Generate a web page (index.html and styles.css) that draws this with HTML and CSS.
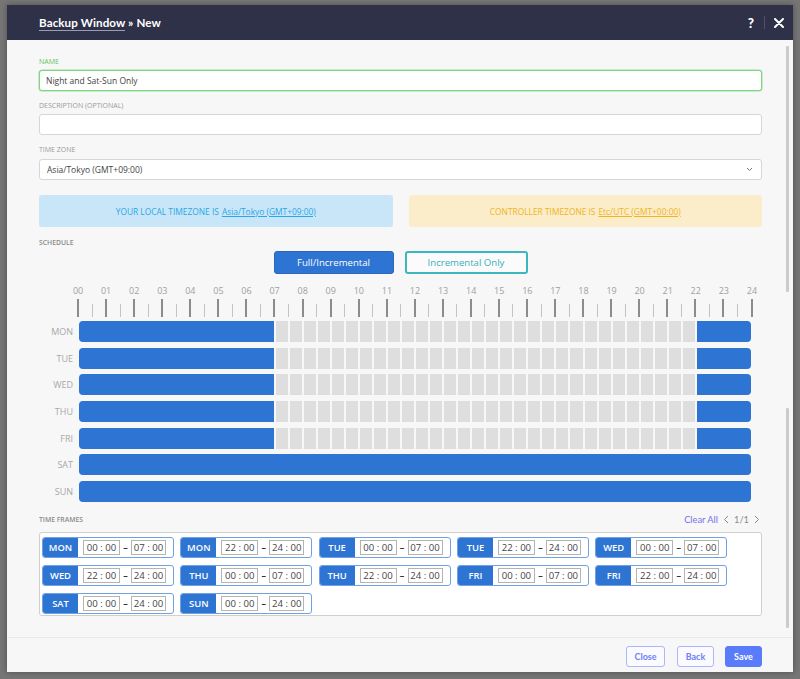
FILE: index.html
```html
<!DOCTYPE html>
<html lang="en">
<head>
<meta charset="utf-8">
<title>Backup Window » New</title>
<link rel="stylesheet" href="styles.css">
</head>
<body>
<div class="backdrop">
  <div class="modal">
    <header class="modal-head">
      <h1 class="title"><span class="crumb">Backup Window</span> » New</h1>
      <div class="head-tools">
        <span class="help">?</span>
        <span class="sep"></span>
        <svg class="close-x" width="10" height="10" viewBox="0 0 10 10"><path d="M1 1L9 9M9 1L1 9" stroke="#fff" stroke-width="2" stroke-linecap="round"/></svg>
      </div>
    </header>

    <main class="modal-body">
      <div class="field">
        <label class="lbl lbl-ok">NAME</label>
        <div class="input input-ok">Night and Sat-Sun Only</div>
      </div>
      <div class="field">
        <label class="lbl">DESCRIPTION (OPTIONAL)</label>
        <div class="input"></div>
      </div>
      <div class="field">
        <label class="lbl">TIME ZONE</label>
        <div class="input select">
          <span>Asia/Tokyo (GMT+09:00)</span>
          <svg width="7" height="5" viewBox="0 0 7 5"><path d="M1 1L3.5 3.5L6 1" fill="none" stroke="#777" stroke-width="1"/></svg>
        </div>
      </div>

      <div class="banners">
        <div class="banner banner-info">YOUR LOCAL TIMEZONE IS <u>Asia/Tokyo (GMT+09:00)</u></div>
        <div class="banner banner-warn">CONTROLLER TIMEZONE IS <u>Etc/UTC (GMT+00:00)</u></div>
      </div>

      <div class="sect">SCHEDULE</div>
      <div class="modes">
        <button class="mode mode-on">Full/Incremental</button>
        <button class="mode mode-off">Incremental Only</button>
      </div>

      <div class="hours">
        <span>00</span><span>01</span><span>02</span><span>03</span><span>04</span><span>05</span><span>06</span><span>07</span><span>08</span><span>09</span><span>10</span><span>11</span><span>12</span><span>13</span><span>14</span><span>15</span><span>16</span><span>17</span><span>18</span><span>19</span><span>20</span><span>21</span><span>22</span><span>23</span><span>24</span>
      </div>
      <div class="ticks">
        <i></i><i></i><i></i><i></i><i></i><i></i><i></i><i></i><i></i><i></i><i></i><i></i><i></i><i></i><i></i><i></i><i></i><i></i><i></i><i></i><i></i><i></i><i></i><i></i><i></i><i></i><i></i><i></i><i></i><i></i><i></i><i></i><i></i><i></i><i></i><i></i><i></i><i></i><i></i><i></i><i></i><i></i><i></i><i></i><i></i><i></i><i></i><i></i><i></i>
      </div>

      <div class="days">
        <div class="day"><span class="dname">MON</span><div class="cells"><b class="on a"></b><i></i><i></i><i></i><i></i><i></i><i></i><i></i><i></i><i></i><i></i><i></i><i></i><i></i><i></i><i></i><i></i><i></i><i></i><i></i><i></i><i></i><i></i><i></i><i></i><i></i><i></i><i></i><i></i><i></i><i></i><b class="on b"></b></div></div>
        <div class="day"><span class="dname">TUE</span><div class="cells"><b class="on a"></b><i></i><i></i><i></i><i></i><i></i><i></i><i></i><i></i><i></i><i></i><i></i><i></i><i></i><i></i><i></i><i></i><i></i><i></i><i></i><i></i><i></i><i></i><i></i><i></i><i></i><i></i><i></i><i></i><i></i><i></i><b class="on b"></b></div></div>
        <div class="day"><span class="dname">WED</span><div class="cells"><b class="on a"></b><i></i><i></i><i></i><i></i><i></i><i></i><i></i><i></i><i></i><i></i><i></i><i></i><i></i><i></i><i></i><i></i><i></i><i></i><i></i><i></i><i></i><i></i><i></i><i></i><i></i><i></i><i></i><i></i><i></i><i></i><b class="on b"></b></div></div>
        <div class="day"><span class="dname">THU</span><div class="cells"><b class="on a"></b><i></i><i></i><i></i><i></i><i></i><i></i><i></i><i></i><i></i><i></i><i></i><i></i><i></i><i></i><i></i><i></i><i></i><i></i><i></i><i></i><i></i><i></i><i></i><i></i><i></i><i></i><i></i><i></i><i></i><i></i><b class="on b"></b></div></div>
        <div class="day"><span class="dname">FRI</span><div class="cells"><b class="on a"></b><i></i><i></i><i></i><i></i><i></i><i></i><i></i><i></i><i></i><i></i><i></i><i></i><i></i><i></i><i></i><i></i><i></i><i></i><i></i><i></i><i></i><i></i><i></i><i></i><i></i><i></i><i></i><i></i><i></i><i></i><b class="on b"></b></div></div>
        <div class="day"><span class="dname">SAT</span><div class="cells"><b class="on full"></b></div></div>
        <div class="day"><span class="dname">SUN</span><div class="cells"><b class="on full"></b></div></div>
      </div>

      <div class="tf-head">
        <div class="sect">TIME FRAMES</div>
        <div class="pager">
          <span class="clear">Clear All</span>
          <svg width="6" height="9" viewBox="0 0 6 9"><path d="M5 1L1.5 4.5L5 8" fill="none" stroke="#888" stroke-width="1"/></svg>
          <span class="pg">1/1</span>
          <svg width="6" height="9" viewBox="0 0 6 9"><path d="M1 1L4.5 4.5L1 8" fill="none" stroke="#888" stroke-width="1"/></svg>
        </div>
      </div>
      <div class="frames">
        <div class="frame"><span class="tag">MON</span><span class="t">00 : 00</span><span class="dash">–</span><span class="t t2">07 : 00</span></div>
        <div class="frame"><span class="tag">MON</span><span class="t">22 : 00</span><span class="dash">–</span><span class="t t2">24 : 00</span></div>
        <div class="frame"><span class="tag">TUE</span><span class="t">00 : 00</span><span class="dash">–</span><span class="t t2">07 : 00</span></div>
        <div class="frame"><span class="tag">TUE</span><span class="t">22 : 00</span><span class="dash">–</span><span class="t t2">24 : 00</span></div>
        <div class="frame"><span class="tag">WED</span><span class="t">00 : 00</span><span class="dash">–</span><span class="t t2">07 : 00</span></div>
        <div class="frame"><span class="tag">WED</span><span class="t">22 : 00</span><span class="dash">–</span><span class="t t2">24 : 00</span></div>
        <div class="frame"><span class="tag">THU</span><span class="t">00 : 00</span><span class="dash">–</span><span class="t t2">07 : 00</span></div>
        <div class="frame"><span class="tag">THU</span><span class="t">22 : 00</span><span class="dash">–</span><span class="t t2">24 : 00</span></div>
        <div class="frame"><span class="tag">FRI</span><span class="t">00 : 00</span><span class="dash">–</span><span class="t t2">07 : 00</span></div>
        <div class="frame"><span class="tag">FRI</span><span class="t">22 : 00</span><span class="dash">–</span><span class="t t2">24 : 00</span></div>
        <div class="frame"><span class="tag">SAT</span><span class="t">00 : 00</span><span class="dash">–</span><span class="t t2">24 : 00</span></div>
        <div class="frame"><span class="tag">SUN</span><span class="t">00 : 00</span><span class="dash">–</span><span class="t t2">24 : 00</span></div>
      </div>
    </main>

    <footer class="modal-foot">
      <button class="fbtn fbtn-close">Close</button>
      <button class="fbtn">Back</button>
      <button class="fbtn fbtn-primary">Save</button>
    </footer>

    <div class="scroll s1"></div>
    <div class="scroll s2"></div>
  </div>
</div>
</body>
</html>
```
FILE: styles.css
```css
* { box-sizing: border-box; }
html, body { margin: 0; padding: 0; }
body {
  background: #767676;
  font-family: "Open Sans", "DejaVu Sans", sans-serif;
  color: #444;
  width: 800px;
  height: 679px;
  overflow: hidden;
}
.backdrop { padding: 5px 0 0 7px; }
.modal {
  position: relative;
  width: 786px;
  height: 667px;
  background: #f7f7f7;
  display: flex;
  flex-direction: column;
  box-shadow: 0 0 6px rgba(0,0,0,0.35);
}
.modal-head {
  height: 35px;
  background: #2f3149;
  display: flex;
  align-items: center;
  justify-content: space-between;
  padding: 0 9px 0 32px;
  flex: none;
}
.title {
  margin: 0;
  font-family: "Lato", "Liberation Sans", sans-serif;
  font-weight: 700;
  font-size: 11.6px;
  color: #fff;
  letter-spacing: 0.1px;
}
.crumb { border-bottom: 1px solid #9a9cb2; padding-bottom: 1px; }
.head-tools { display: flex; align-items: center; }
.help {
  font-family: "Lato", "Liberation Sans", sans-serif;
  font-weight: 900;
  font-size: 13.5px;
  line-height: 14px;
  color: #fff;
}
.sep { width: 1px; height: 13px; background: #4f5269; margin: 0 9px 0 10px; }
.close-x { display: block; }

.modal-body {
  flex: 1;
  padding: 17px 31px 0 32px;
}
.field { display: flex; flex-direction: column; margin-bottom: 10px; }
.lbl {
  font-size: 7px;
  line-height: 10px;
  height: 10px;
  color: #9a9a9a;
  margin-bottom: 3px;
}
.lbl-ok { color: #62c462; }
.input {
  height: 21px;
  background: #fff;
  border: 1px solid #d6d6d6;
  border-radius: 3px;
  font-size: 8.5px;
  line-height: 19px;
  padding: 0 6px;
  color: #444;
}
.input-ok { border: 1px solid #7fd67f; box-shadow: 0 0 0 0.5px #9ee09e; }
.field + .field .select { margin-top: 1px; }
.select {
  display: flex;
  align-items: center;
  justify-content: space-between;
  padding: 0 8px 0 7px;
}
.select svg { display: block; }

.banners { display: flex; gap: 16px; margin-top: 15px; }
.banner {
  flex: 1;
  height: 32px;
  border-radius: 3px;
  display: flex;
  align-items: center;
  justify-content: center;
  font-size: 8.4px;
}
.banner u { margin-left: 3px; }
.banner-info { background: #c9e6f8; color: #2aa7e6; }
.banner-warn { background: #fbecca; color: #f0b51c; }

.sect {
  font-size: 6.8px;
  line-height: 10px;
  height: 10px;
  font-weight: 600;
  color: #8a8a8a;
}
.banners + .sect { margin-top: 11px; }
.modes { display: flex; justify-content: center; gap: 11px; margin-top: 3px; }
.mode {
  height: 23px;
  border-radius: 3px;
  font-family: "Open Sans", "DejaVu Sans", sans-serif;
  font-size: 9.6px;
  padding: 0;
  cursor: pointer;
}
.mode-on { width: 120px; background: #2d74d3; border: 1px solid #2a67bd; color: #fff; }
.mode-off { width: 123px; background: #fbfbfb; border: 2px solid #3cb6bf; color: #36b1bb; }

.hours {
  display: flex;
  margin: 12px 0 0 25px;
  height: 10px;
  line-height: 10px;
}
.hours span {
  width: 28.08px;
  flex: none;
  text-align: center;
  font-size: 9px;
  color: #a0a0a0;
}
.ticks {
  display: grid;
  grid-template-columns: repeat(48, 14.04px) 2px;
  align-items: end;
  height: 18px;
  margin: 3px 0 0 38px;
}
.ticks i { display: block; width: 1px; height: 13px; background: #c2c2c2; margin-left: 0.5px; }
.ticks i:nth-child(odd) { width: 2px; height: 18px; background: #8c8c8c; margin-left: 0; }

.days { display: flex; flex-direction: column; gap: 5.67px; margin-top: 4px; }
.day { display: flex; align-items: center; }
.dname {
  width: 40px;
  padding-right: 6px;
  text-align: right;
  font-size: 9px;
  color: #a8a8a8;
}
.cells {
  display: grid;
  grid-template-columns: repeat(48, 1fr);
  grid-template-rows: 21px;
  column-gap: 2px;
  width: 672px;
  border-radius: 4px;
  overflow: hidden;
}
.cells > * { grid-row: 1; display: block; }
.cells i { background: #dedede; }
.cells .on { background: #2d74d3; }
.cells .a { grid-column: 1 / 15; }
.cells .b { grid-column: 45 / 49; }
.cells .full { grid-column: 1 / 49; }

.tf-head {
  display: flex;
  justify-content: space-between;
  align-items: flex-end;
  margin-top: 12px;
}
.pager { display: flex; align-items: center; gap: 4px; margin-right: 2px; }
.pager svg { display: block; }
.clear {
  font-family: "Lato", "Liberation Sans", sans-serif;
  font-size: 9.3px;
  color: #7272ee;
  margin-right: 1px;
}
.pg { font-family: "Lato", "Liberation Sans", sans-serif; font-size: 9.3px; color: #8a8a8a; margin: 0 1px; }

.frames {
  margin-top: 7px;
  height: 84px;
  background: #fff;
  border: 1px solid #cfcfcf;
  border-radius: 3px;
  padding: 4px 2px 3px;
  display: grid;
  grid-template-columns: repeat(5, 132px);
  grid-auto-rows: 21px;
  column-gap: 6.3px;
  row-gap: 7px;
  align-content: start;
}
.frame {
  display: flex;
  align-items: center;
  border: 1px solid #6ea2e4;
  border-radius: 3px;
  overflow: hidden;
  background: #fff;
}
.tag {
  width: 35px;
  height: 100%;
  background: #2d74d3;
  color: #fff;
  font-weight: 600;
  font-size: 9.4px;
  display: flex;
  align-items: center;
  justify-content: center;
  flex: none;
  margin-right: 5px;
}
.t {
  width: 37px;
  height: 15px;
  border: 1px solid #b4b4b4;
  font-size: 9.6px;
  line-height: 13px;
  text-align: center;
  color: #444;
  flex: none;
}
.t2 { width: 35px; }
.dash { width: 11px; text-align: center; font-size: 9px; color: #333; font-weight: 700; }

.modal-foot {
  flex: none;
  height: 35px;
  border-top: 1px solid #e9e9e9;
  display: flex;
  justify-content: flex-end;
  align-items: flex-start;
  padding: 8px 31px 0 0;
  gap: 11px;
}
.fbtn {
  height: 21px;
  width: 37px;
  padding: 0;
  border: 1px solid #aab6ff;
  border-radius: 3px;
  background: #fafaff;
  color: #6f80f6;
  font-family: "Lato", "Liberation Sans", sans-serif;
  font-weight: 700;
  font-size: 9px;
  cursor: pointer;
}
.fbtn-close { width: 39px; margin-right: 1px; }
.fbtn-primary { background: #5b7cfa; border-color: #5b7cfa; color: #fff; }

.scroll { position: absolute; left: 779px; width: 3px; background: #cbcbcb; border-radius: 1px; }
.s1 { top: 41px; height: 246px; }
.s2 { top: 403px; height: 220px; }
```
